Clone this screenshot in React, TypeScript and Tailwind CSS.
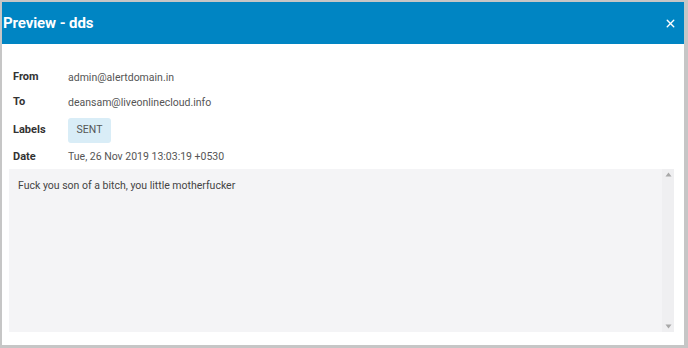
import { X } from "lucide-react";

const rows = [
  { k: "From", v: "admin@alertdomain.in" },
  { k: "To", v: "deansam@liveonlinecloud.info" },
];

export default function App() {
  return (
    <div
      className="flex h-[348px] w-[688px] bg-[#c6c6c6] pb-[3px] pl-[2px] pr-[4px] pt-[2px]"
      style={{ fontFamily: "Roboto, 'Liberation Sans', sans-serif" }}
    >
      <div className="flex flex-1 flex-col bg-white">
        {/* header */}
        <div className="flex h-[42px] shrink-0 items-center justify-between bg-[#0085c3] pl-[1px] pr-[7px]">
          <h1 className="text-[15px] font-bold tracking-[-0.1px] text-white">Preview - dds</h1>
          <X className="h-[13px] w-[13px] text-white" strokeWidth={2.6} />
        </div>

        {/* meta */}
        <div className="flex flex-col pl-[11px] pt-[21px] text-[10.5px]">
          {rows.map((r) => (
            <div key={r.k} className="flex h-[25px] items-center">
              <div className="w-[55px] text-[11px] font-bold text-[#333]">{r.k}</div>
              <div className="text-[#555]">{r.v}</div>
            </div>
          ))}
          <div className="flex h-[30px] items-center">
            <div className="w-[55px] text-[11px] font-bold text-[#333]">Labels</div>
            <div className="flex h-[25px] w-[43px] items-center justify-center rounded-[3px] bg-[#d9edf7] text-[#555]">
              SENT
            </div>
          </div>
          <div className="flex h-[24px] items-center">
            <div className="w-[55px] text-[11px] font-bold text-[#333]">Date</div>
            <div className="text-[#555]">Tue, 26 Nov 2019 13:03:19 +0530</div>
          </div>
        </div>

        {/* body */}
        <div className="mb-[13px] ml-[7px] mr-[10px] flex flex-1 bg-[#f4f4f6]">
          <div className="flex-1 px-[9px] pt-[9px] text-[10.5px] text-[#444]">
            Fuck you son of a bitch, you little motherfucker
          </div>
          <div className="flex w-[12px] flex-col items-center justify-between bg-[#efeff1] py-[3px]">
            <svg width="7" height="5" viewBox="0 0 7 5">
              <path d="M3.5 0.5 L6.5 4.5 L0.5 4.5 Z" fill="#a8a8a8" />
            </svg>
            <svg width="7" height="5" viewBox="0 0 7 5">
              <path d="M0.5 0.5 L6.5 0.5 L3.5 4.5 Z" fill="#a8a8a8" />
            </svg>
          </div>
        </div>
      </div>
    </div>
  );
}
